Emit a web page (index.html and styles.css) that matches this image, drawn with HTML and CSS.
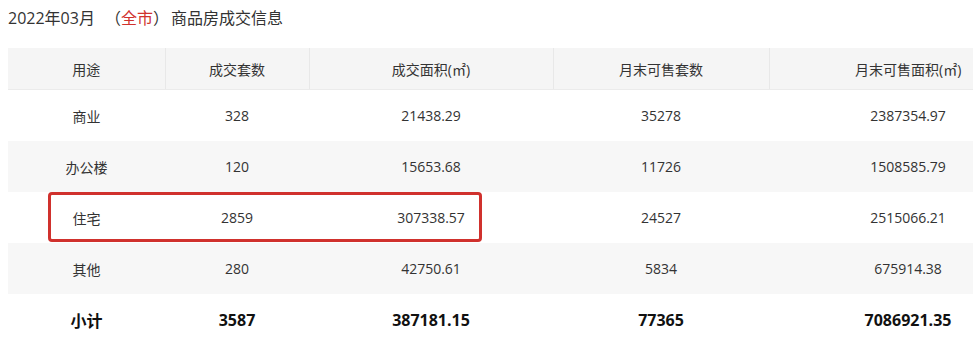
FILE: index.html
```html
<!DOCTYPE html>
<html lang="zh-CN">
<head>
<meta charset="utf-8">
<title>商品房成交信息</title>
<link rel="stylesheet" href="styles.css">
</head>
<body>
<div class="page">
  <h1 class="title"><span class="month">2022年03月</span><span class="paren">（<span class="city">全市</span>）</span>商品房成交信息</h1>
  <div class="table-wrap">
    <table class="deals">
      <colgroup>
        <col class="c1"><col class="c2"><col class="c3"><col class="c4"><col class="c5">
      </colgroup>
      <thead>
        <tr><th>用途</th><th>成交套数</th><th>成交面积(㎡)</th><th>月末可售套数</th><th>月末可售面积(㎡)</th></tr>
      </thead>
      <tbody>
        <tr><td>商业</td><td>328</td><td>21438.29</td><td>35278</td><td>2387354.97</td></tr>
        <tr class="alt"><td>办公楼</td><td>120</td><td>15653.68</td><td>11726</td><td>1508585.79</td></tr>
        <tr><td>住宅</td><td>2859</td><td>307338.57</td><td>24527</td><td>2515066.21</td></tr>
        <tr class="alt"><td>其他</td><td>280</td><td>42750.61</td><td>5834</td><td>675914.38</td></tr>
        <tr class="total"><td>小计</td><td>3587</td><td>387181.15</td><td>77365</td><td>7086921.35</td></tr>
      </tbody>
    </table>
    <div class="highlight"></div>
  </div>
</div>
</body>
</html>
```

FILE: styles.css
```css
html, body {
  margin: 0;
  padding: 0;
  background: #ffffff;
  overflow: hidden;
}

.page {
  padding: 6px 0 0 8px;
  font-family: "Open Sans", "Noto Sans CJK SC", sans-serif;
  color: #333333;
}

.title {
  margin: 0 0 18px 0;
  font-size: 16px;
  line-height: 24px;
  font-weight: normal;
  color: #333333;
  white-space: nowrap;
}

.month {
  margin-right: 10px;
}

.paren {
  margin-right: 2px;
}

.city {
  color: #d0312d;
}

.table-wrap {
  position: relative;
  overflow: hidden;
}

.deals {
  width: 1039px;
  border-collapse: collapse;
  table-layout: fixed;
  font-size: 14px;
}

.c1 { width: 157px; }
.c2 { width: 144px; }
.c3 { width: 244px; }
.c4 { width: 216px; }
.c5 { width: 278px; }

.deals th {
  height: 41px;
  padding: 0;
  background: #f5f5f5;
  font-weight: normal;
  color: #333333;
  text-align: center;
  border-left: 1px solid #e8e8e8;
  border-bottom: 1px solid #ebebeb;
}

.deals th:first-child {
  border-left: none;
}

.deals td {
  height: 51px;
  padding: 0;
  text-align: center;
  color: #333333;
}

.deals tr.alt td {
  background: #f7f7f7;
}

.deals tr.total td {
  font-size: 16px;
  font-weight: bold;
  color: #111111;
}

.highlight {
  position: absolute;
  left: 40px;
  top: 144px;
  width: 434px;
  height: 50px;
  box-sizing: border-box;
  border: 3px solid #d0312d;
  border-radius: 4px;
}
```
